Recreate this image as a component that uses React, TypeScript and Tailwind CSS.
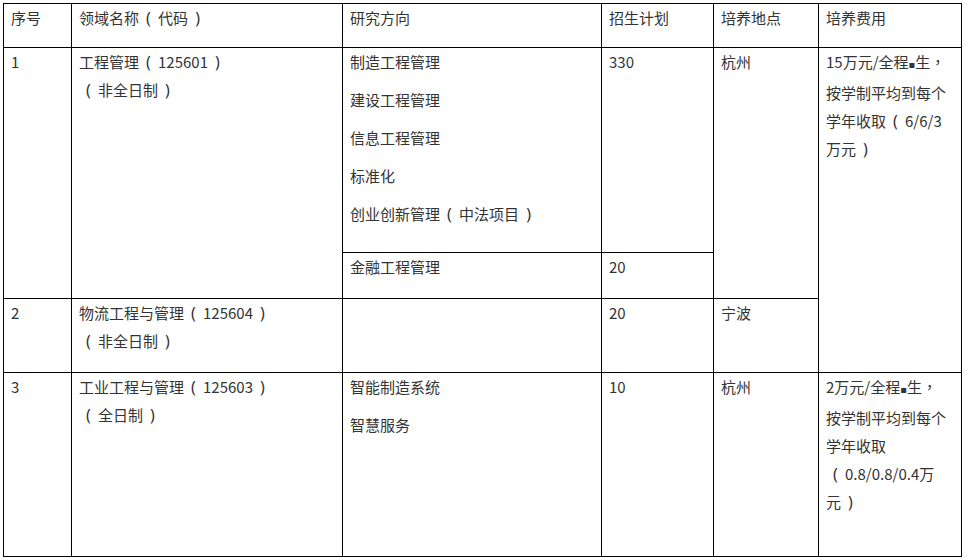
const cell = "border border-black align-top pl-[7px] pr-1 pt-0 text-left font-normal";

// the original page centres fullwidth punctuation in a wide box
function T({ s }: { s: string }) {
  const parts = s.split(/([（），▪])/);
  return (
    <>
      {parts.map((p, i) => {
        if (p === "▪")
          return (
            <span key={i} className="font-['DejaVu_Sans'] text-[10px]">
              ▪
            </span>
          );
        if (p === "（" || p === "）")
          return (
            <span key={i} className="inline-block w-[19px] text-center font-['Noto_Sans'] text-[16px]">
              {p === "（" ? "(" : ")"}
            </span>
          );
        if (p === "，")
          return (
            <span key={i} className="font-['Noto_Sans_CJK_TC']">
              {p}
            </span>
          );
        return <span key={i}>{p}</span>;
      })}
    </>
  );
}

function Lines({ items }: { items: string[] }) {
  return (
    <>
      {items.map((t) => (
        <div key={t} className="whitespace-nowrap">
          <T s={t} />
        </div>
      ))}
    </>
  );
}

function Directions({ items }: { items: string[] }) {
  return (
    <>
      {items.map((t) => (
        <p key={t} className="mb-[10px] whitespace-nowrap">
          <T s={t} />
        </p>
      ))}
    </>
  );
}

export default function App() {
  return (
    <div className="h-[560px] w-[966px] overflow-hidden bg-white pl-[3px] pt-[3px]">
      <table
        className="table-fixed border-collapse text-[15px] leading-[28px] text-[#333]"
        style={{ width: 958, fontFamily: '"Noto Sans CJK SC", "Noto Sans", sans-serif' }}
      >
        <colgroup>
          <col className="w-[68px]" />
          <col className="w-[271px]" />
          <col className="w-[259px]" />
          <col className="w-[112px]" />
          <col className="w-[105px]" />
          <col className="w-[143px]" />
        </colgroup>
        <thead>
          <tr className="h-[44px]">
            <th className={cell}>序号</th>
            <th className={cell}>
              <T s="领域名称（代码）" />
            </th>
            <th className={cell}>研究方向</th>
            <th className={cell}>招生计划</th>
            <th className={cell}>培养地点</th>
            <th className={cell}>培养费用</th>
          </tr>
        </thead>
        <tbody>
          <tr className="h-[205px]">
            <td className={cell} rowSpan={2}>1</td>
            <td className={cell} rowSpan={2}>
              <Lines items={["工程管理（125601）", "（非全日制）"]} />
            </td>
            <td className={cell}>
              <Directions
                items={["制造工程管理", "建设工程管理", "信息工程管理", "标准化", "创业创新管理（中法项目）"]}
              />
            </td>
            <td className={cell}>330</td>
            <td className={cell} rowSpan={2}>杭州</td>
            <td className={cell} rowSpan={3}>
              <Lines items={["15万元/全程▪生，", "按学制平均到每个", "学年收取（6/6/3", "万元）"]} />
            </td>
          </tr>
          <tr className="h-[46px]">
            <td className={cell}>金融工程管理</td>
            <td className={cell}>20</td>
          </tr>
          <tr className="h-[74px]">
            <td className={cell}>2</td>
            <td className={cell}>
              <Lines items={["物流工程与管理（125604）", "（非全日制）"]} />
            </td>
            <td className={cell}></td>
            <td className={cell}>20</td>
            <td className={cell}>宁波</td>
          </tr>
          <tr className="h-[184px]">
            <td className={cell}>3</td>
            <td className={cell}>
              <Lines items={["工业工程与管理（125603）", "（全日制）"]} />
            </td>
            <td className={cell}>
              <Directions items={["智能制造系统", "智慧服务"]} />
            </td>
            <td className={cell}>10</td>
            <td className={cell}>杭州</td>
            <td className={cell}>
              <Lines items={["2万元/全程▪生，", "按学制平均到每个", "学年收取", "（0.8/0.8/0.4万", "元）"]} />
            </td>
          </tr>
        </tbody>
      </table>
    </div>
  );
}
